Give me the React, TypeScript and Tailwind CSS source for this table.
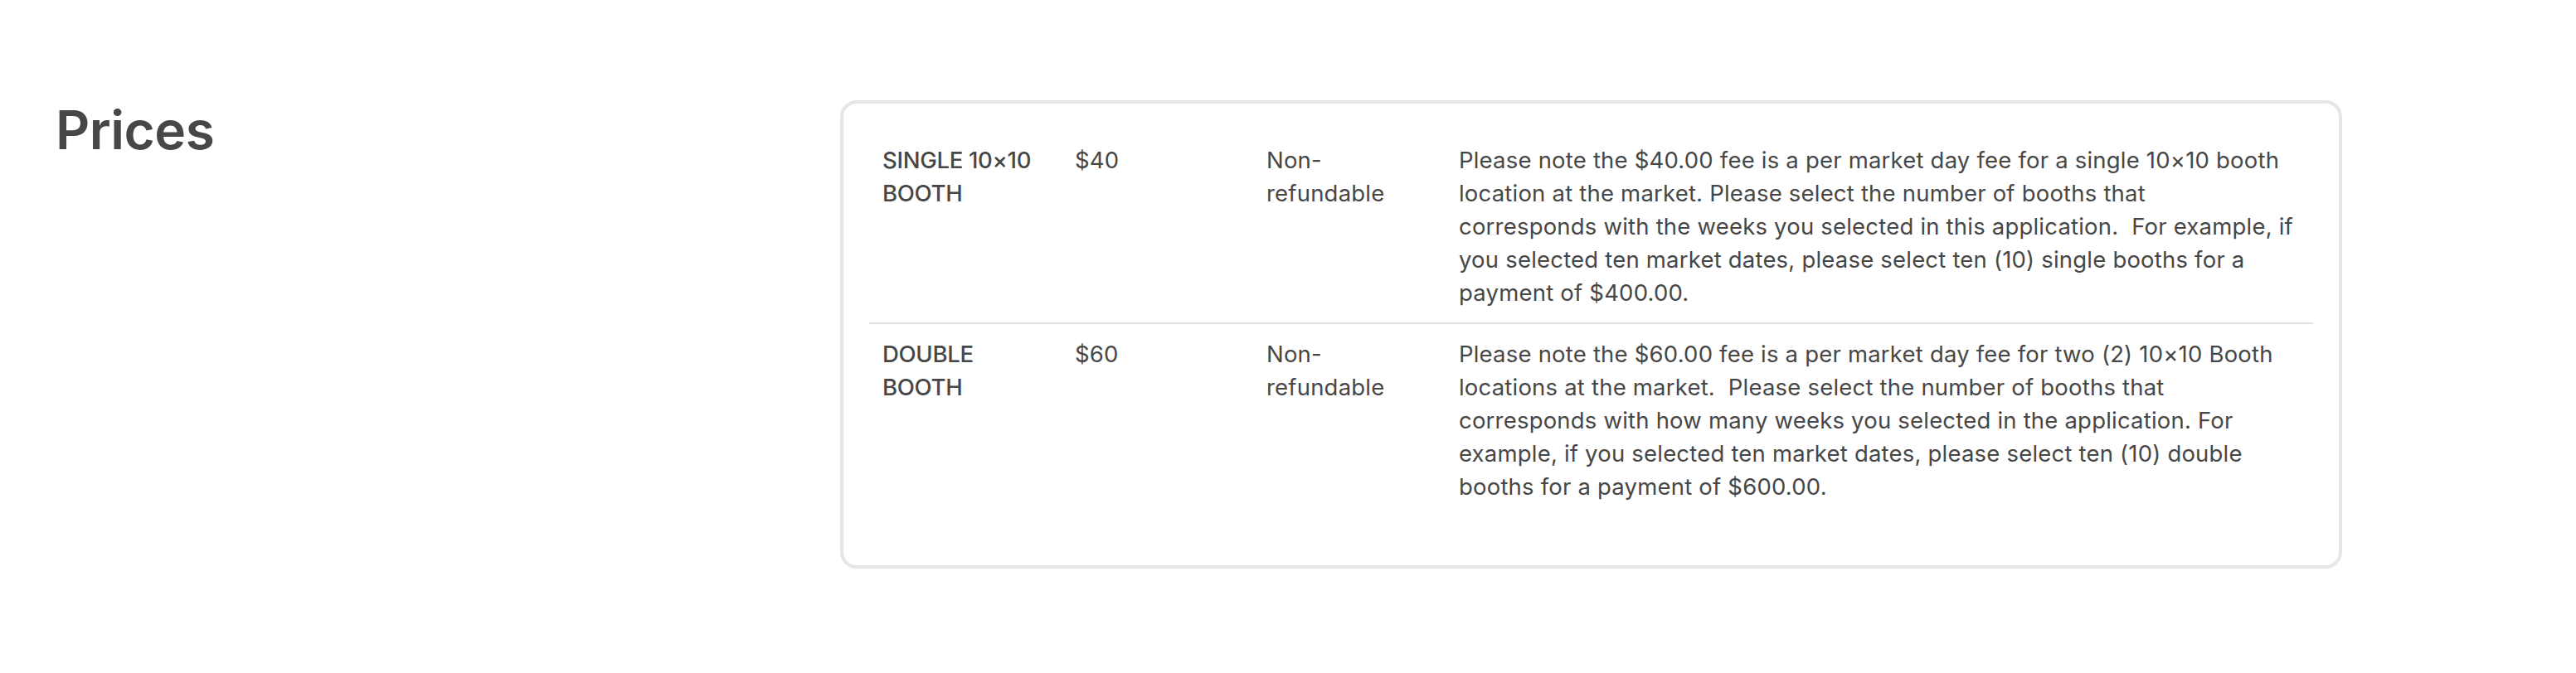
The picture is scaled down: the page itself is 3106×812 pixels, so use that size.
const rows = [
  {
    name: "SINGLE 10×10 BOOTH",
    price: "$40",
    refund: "Non-refundable",
    note: [
      "Please note the $40.00 fee is a per market day fee for a single 10×10 booth",
      "location at the market. Please select the number of booths that",
      "corresponds with the weeks you selected in this application.\u00a0 For example, if",
      "you selected ten market dates, please select ten (10) single booths for a",
      "payment of $400.00.",
    ],
  },
  {
    name: "DOUBLE BOOTH",
    price: "$60",
    refund: "Non-refundable",
    note: [
      "Please note the $60.00 fee is a per market day fee for two (2) 10×10 Booth",
      "locations at the market.\u00a0 Please select the number of booths that",
      "corresponds with how many weeks you selected in the application. For",
      "example, if you selected ten market dates, please select ten (10) double",
      "booths for a payment of $600.00.",
    ],
  },
];

export default function App() {
  return (
    <div className="min-h-[812px] w-[3106px] bg-white font-['Inter',sans-serif] text-[#474747]">
      <div className="flex pt-[121px] pl-[67px]">
        {/* Heading */}
        <div className="w-[946px] shrink-0">
          <h2 className="text-[64px] font-semibold leading-[1.2] tracking-[-0.5px] mt-[-2px]">Prices</h2>
        </div>

        {/* Prices table */}
        <div className="w-[1811px] rounded-[20px] border-4 border-[#e6e6e6] bg-white px-[31px] pt-[32px] pb-[59px]">
          {rows.map((row, i) => (
            <div
              key={row.name}
              className={`grid grid-cols-[232px_231px_232px_1fr] text-[27.5px] leading-[40px] tracking-[0.2px] ${
                i < rows.length - 1 ? "border-b-2 border-[#dde2e2]" : ""
              }`}
            >
              <div className="px-4 py-4 font-medium uppercase tracking-[-0.3px]">{row.name}</div>
              <div className="px-4 py-4">{row.price}</div>
              <div className="px-4 py-4">{row.refund}</div>
              <div className="px-4 py-4">
                {row.note.map((line) => (
                  <div key={line} className="whitespace-nowrap">
                    {line}
                  </div>
                ))}
              </div>
            </div>
          ))}
        </div>
      </div>
    </div>
  );
}
